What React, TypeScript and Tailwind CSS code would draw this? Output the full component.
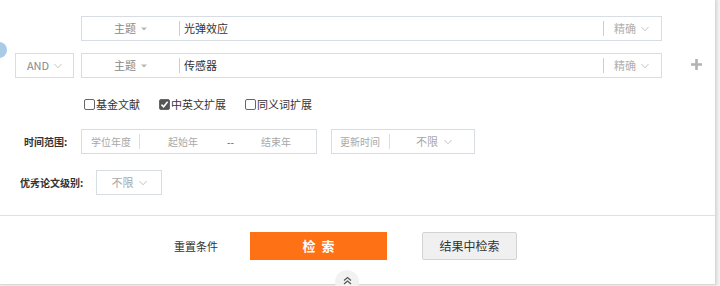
import React from "react";

const font = { fontFamily: '"Noto Sans CJK SC", "Noto Sans", sans-serif' };

function Chev({ className = "" }: { className?: string }) {
  return (
    <svg width="8" height="6" viewBox="0 0 8 6" className={className}>
      <path d="M0.5 1 L4 4.8 L7.5 1" fill="none" stroke="#c4c4c4" strokeWidth="1" />
    </svg>
  );
}

function Caret() {
  return (
    <svg width="6" height="4" viewBox="0 0 6 4" className="ml-[5px]">
      <path d="M0 0.5 L6 0.5 L3 3.5 Z" fill="#b5b5b5" />
    </svg>
  );
}

function Box({ children, className = "" }: { children?: React.ReactNode; className?: string }) {
  return (
    <div className={"border border-[#d8dce3] bg-white flex items-center " + className}>{children}</div>
  );
}

function SearchRow({ text }: { text: string }) {
  return (
    <Box className="w-[581px] h-[25px]">
      <div className="w-[97px] flex items-center justify-center text-[11px] text-[#888]">
        主题
        <Caret />
      </div>
      <div className="w-px h-[15px] bg-[#cfcfcf]" />
      <div className="flex-1 pl-[4px] text-[11px] text-[#333]">{text}</div>
      <div className="w-px h-[15px] bg-[#cfcfcf]" />
      <div className="w-[57px] flex items-center pl-[10px] text-[11px] text-[#b0b0b0]">
        精确
        <Chev className="ml-[5px]" />
      </div>
    </Box>
  );
}

function Check({ checked, label }: { checked?: boolean; label: string }) {
  return (
    <div className="flex items-center text-[11px] text-[#333]">
      <div
        className={
          "w-[11px] h-[11px] rounded-[2px] border border-[#666] mr-[1px] flex items-center justify-center " +
          (checked ? "bg-[#555]" : "bg-white")
        }
      >
        {checked && (
          <svg width="9" height="9" viewBox="0 0 9 9">
            <path d="M1.5 4.6 L3.6 6.7 L7.6 1.8" fill="none" stroke="#fff" strokeWidth="1.6" />
          </svg>
        )}
      </div>
      {label}
    </div>
  );
}

export default function App() {
  return (
    <div className="w-[720px] h-[286px] relative bg-[#f3f3f3] overflow-hidden" style={font}>
      <div className="w-[716px] h-[285px] bg-white border-r border-b border-[#d9d9d9] relative flex flex-col shadow-[1px_0_3px_rgba(0,0,0,0.12)]">
        {/* left circle badge */}
        <div className="absolute left-[-9px] top-[42px] w-[16px] h-[16px] rounded-full bg-[#a9cbe8]" />

        <div className="pt-[16px] pl-[81px]">
          <SearchRow text="光弹效应" />
        </div>
        <div className="mt-[12px] flex items-center">
          <Box className="ml-[15px] w-[59px] h-[25px] justify-center text-[11px] text-[#888]">
            AND
            <Chev className="ml-[5px]" />
          </Box>
          <div className="ml-[7px]">
            <SearchRow text="传感器" />
          </div>
          <div className="ml-[29px] pb-[2px]">
            <svg width="11" height="11" viewBox="0 0 11 11">
              <path d="M5.5 0 V11 M0 5.5 H11" stroke="#b3b3b3" strokeWidth="2.6" />
            </svg>
          </div>
        </div>

        <div className="mt-[19px] pl-[84px] flex items-center gap-[19px] h-[14px]">
          <Check label="基金文献" />
          <Check checked label="中英文扩展" />
          <Check label="同义词扩展" />
        </div>

        <div className="mt-[18px] flex items-center">
          <div className="w-[81px] pl-[24px] text-[10px] font-bold text-[#333]">时间范围:</div>
          <Box className="w-[236px] h-[25px] text-[10px] text-[#a8a8a8]">
            <div className="w-[57px] pl-[9px]">学位年度</div>
            <div className="w-px h-[15px] bg-[#ddd]" />
            <div className="ml-[28px]">起始年</div>
            <div className="ml-[29px] text-[#555]">--</div>
            <div className="ml-[27px]">结束年</div>
          </Box>
          <Box className="ml-[14px] w-[144px] h-[25px] text-[10px] text-[#a8a8a8]">
            <div className="w-[57px] pl-[8px]">更新时间</div>
            <div className="w-px h-[15px] bg-[#ddd]" />
            <div className="flex-1 flex items-center text-[11px] pl-[26px]">
              不限
              <Chev className="ml-[6px]" />
            </div>
          </Box>
        </div>

        <div className="mt-[16px] flex items-center">
          <div className="w-[96px] pl-[20px] text-[10px] font-bold text-[#333]">优秀论文级别:</div>
          <Box className="w-[66px] h-[25px] justify-center text-[11px] text-[#a8a8a8]">
            不限
            <Chev className="ml-[5px]" />
          </Box>
        </div>

        <div className="mt-[20px] h-px bg-[#dde1e6] w-full" />

        <div className="mt-[16px] flex items-center">
          <div className="ml-[174px] w-[44px] text-[11px] text-[#333]">重置条件</div>
          <div className="ml-[32px] w-[137px] h-[28px] bg-[#ff7115] flex items-center justify-center text-white text-[13px] font-bold tracking-[6px] pl-[6px]">
            检索
          </div>
          <div className="ml-[35px] w-[95px] h-[28px] bg-[#f0f0f0] border border-[#d3d3d3] rounded-[2px] flex items-center justify-center text-[12px] text-[#333]">
            结果中检索
          </div>
        </div>

        {/* collapse bubble */}
        <div className="absolute left-[335px] top-[270px] w-[24px] h-[24px] rounded-full bg-[#f2f2f2] flex items-start justify-center pt-[6px]">
          <svg width="9" height="9" viewBox="0 0 9 9">
            <path d="M1 4.5 L4.5 1.5 L8 4.5 M1 8 L4.5 5 L8 8" fill="none" stroke="#555" strokeWidth="1.2" />
          </svg>
        </div>
      </div>
    </div>
  );
}
